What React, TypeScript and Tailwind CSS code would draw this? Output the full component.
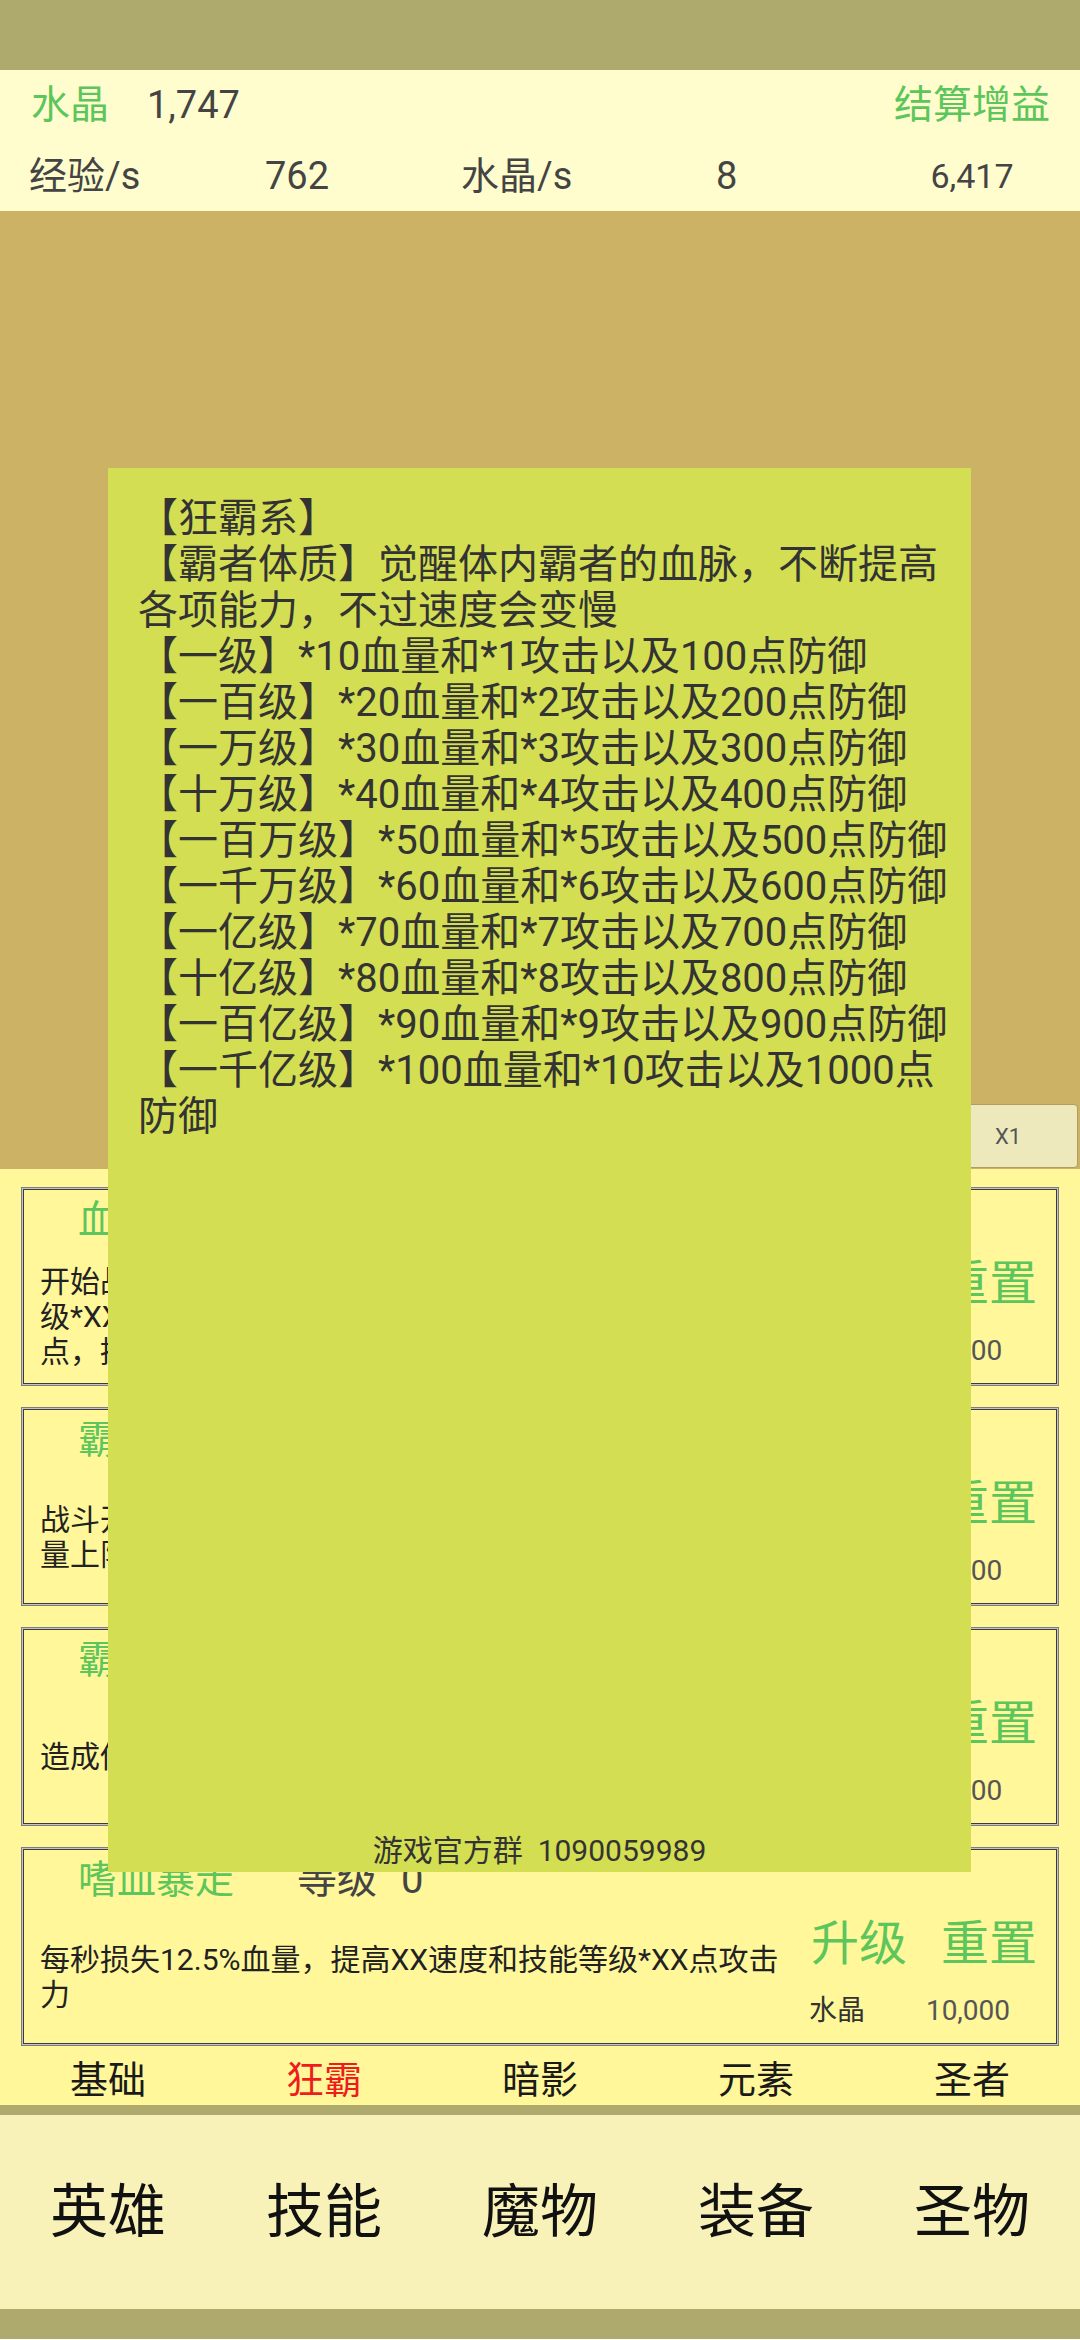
import React from 'react'

type Skill = {
  name: string
  level: number
  desc: React.ReactNode
  cost: string
}

const skills: Skill[] = [
  {
    name: '血之护盾',
    level: 0,
    desc: (
      <>
        开始战斗时获得护盾，护盾值为技能等
        <br />
        级*XX点血量，持续时间为技能等级*XX秒
        <br />
        点，提高XX防御
      </>
    ),
    cost: '1,000',
  },
  {
    name: '霸者体质',
    level: 0,
    desc: (
      <>
        战斗开始时提高技能等级*XX点攻击和血
        <br />
        量上限
      </>
    ),
    cost: '1,000',
  },
  {
    name: '霸王之力',
    level: 0,
    desc: <>造成伤害时吸取XX%伤害值的血量</>,
    cost: '1,000',
  },
  {
    name: '嗜血暴走',
    level: 0,
    desc: <>每秒损失12.5%血量，提高XX速度和技能等级*XX点攻击力</>,
    cost: '10,000',
  },
]

const infoLines = [
  '【狂霸系】',
  '【霸者体质】觉醒体内霸者的血脉，不断提高各项能力，不过速度会变慢',
  '【一级】*10血量和*1攻击以及100点防御',
  '【一百级】*20血量和*2攻击以及200点防御',
  '【一万级】*30血量和*3攻击以及300点防御',
  '【十万级】*40血量和*4攻击以及400点防御',
  '【一百万级】*50血量和*5攻击以及500点防御',
  '【一千万级】*60血量和*6攻击以及600点防御',
  '【一亿级】*70血量和*7攻击以及700点防御',
  '【十亿级】*80血量和*8攻击以及800点防御',
  '【一百亿级】*90血量和*9攻击以及900点防御',
  '【一千亿级】*100血量和*10攻击以及1000点防御',
]

const tabs = ['基础', '狂霸', '暗影', '元素', '圣者']
const nav = ['英雄', '技能', '魔物', '装备', '圣物']

function SkillCard({ skill }: { skill: Skill }) {
  return (
    <div className="flex h-[199px] flex-col border border-[#7d7d7d] p-[2px] shadow-[inset_0_0_0_1px_#c4c4c4,inset_0_0_0_2px_#3c3c3c]">
      {/* title */}
      <div className="flex h-[60px] items-center pl-[54px] leading-none">
        <span className="w-[219px] text-[39px] text-[#5cc55c]">{skill.name}</span>
        <span className="text-[40px] text-[#444]">等级</span>
        <span className="ml-[24px] text-[40px] text-[#444]">{skill.level}</span>
      </div>
      <div className="flex flex-1">
        <div className="flex w-[768px] items-center pl-[16px] text-[30px] leading-[35px] text-[#222]">
          <p>{skill.desc}</p>
        </div>
        <div className="flex flex-1 flex-col">
          <div className="flex h-[68px] items-center gap-[34px] pl-[19px] text-[48px] leading-none text-[#5cc55c]">
            <span>升级</span>
            <span>重置</span>
          </div>
          <div className="flex h-[65px] items-center pl-[17px] text-[28px] leading-none">
            <span className="w-[71px] text-[#333]">水晶</span>
            <span className="flex-1 text-center text-[#555]">{skill.cost}</span>
          </div>
        </div>
      </div>
    </div>
  )
}

export default function App() {
  return (
    <div className="relative h-[2340px] w-[1080px] overflow-hidden font-['Roboto','Noto_Sans_CJK_SC',sans-serif]">
      {/* status bar area */}
      <div className="h-[70px] bg-[#aeaa6e]" />

      {/* resources */}
      <div className="h-[141px] bg-[#fffccd] leading-none text-[#444]">
        <div className="flex h-[70px] items-center pl-[31px] pr-[30px] text-[39px]">
          <span className="text-[#5cc55c]">水晶</span>
          <span className="ml-[38px] text-[38px]">1,747</span>
          <span className="ml-auto text-[#5cc55c]">结算增益</span>
        </div>
        <div className="flex h-[71px] items-center text-[38px]">
          <span className="w-[265px] pl-[29px]">经验/s</span>
          <span className="w-[196px]">762</span>
          <span className="w-[255px]">水晶/s</span>
          <span className="w-[148px]">8</span>
          <span className="flex-1 text-center text-[34px]">6,417</span>
        </div>
      </div>

      {/* battle area */}
      <div className="flex h-[958px] flex-col items-end justify-end bg-[#cbb264] pb-[1px] pr-[2px]">
        <button className="flex h-[64px] w-[140px] items-center justify-center rounded-[4px] border border-[#b19d5f] bg-[#eee9bd] text-[22px] text-[#555]">
          X1
        </button>
      </div>

      {/* skill list */}
      <div className="bg-[#fff799] pt-[18px]">
        <div className="mx-[21px] flex flex-col gap-[21px]">
          {skills.map((s) => (
            <SkillCard key={s.name} skill={s} />
          ))}
        </div>
        <div className="grid h-[59px] grid-cols-5 items-center pt-[9px] text-center text-[38px] leading-none">
          {tabs.map((t, i) => (
            <span key={t} className={i === 1 ? 'text-[#ee1c1c]' : 'text-[#1a1a1a]'}>
              {t}
            </span>
          ))}
        </div>
      </div>

      <div className="h-[10px] bg-[#aeaa6e]" />

      {/* bottom nav */}
      <div className="grid h-[194px] grid-cols-5 items-center bg-[#f8f2b8] text-center text-[58px] leading-none text-[#111]">
        {nav.map((n) => (
          <span key={n}>{n}</span>
        ))}
      </div>

      <div className="h-[30px] bg-[#aeaa6e]" />

      {/* description popup */}
      <div className="absolute left-[108px] top-[468px] flex h-[1404px] w-[863px] flex-col bg-[#d4de52] text-[#333]">
        <div className="w-[850px] flex-1 pl-[30px] pt-[28px] text-[40px] leading-[46px]">
          {infoLines.map((l) => (
            <p key={l}>{l}</p>
          ))}
        </div>
        <div className="pb-[3px] text-center text-[30px] leading-[36px]">游戏官方群&nbsp;&nbsp;1090059989</div>
      </div>
    </div>
  )
}
